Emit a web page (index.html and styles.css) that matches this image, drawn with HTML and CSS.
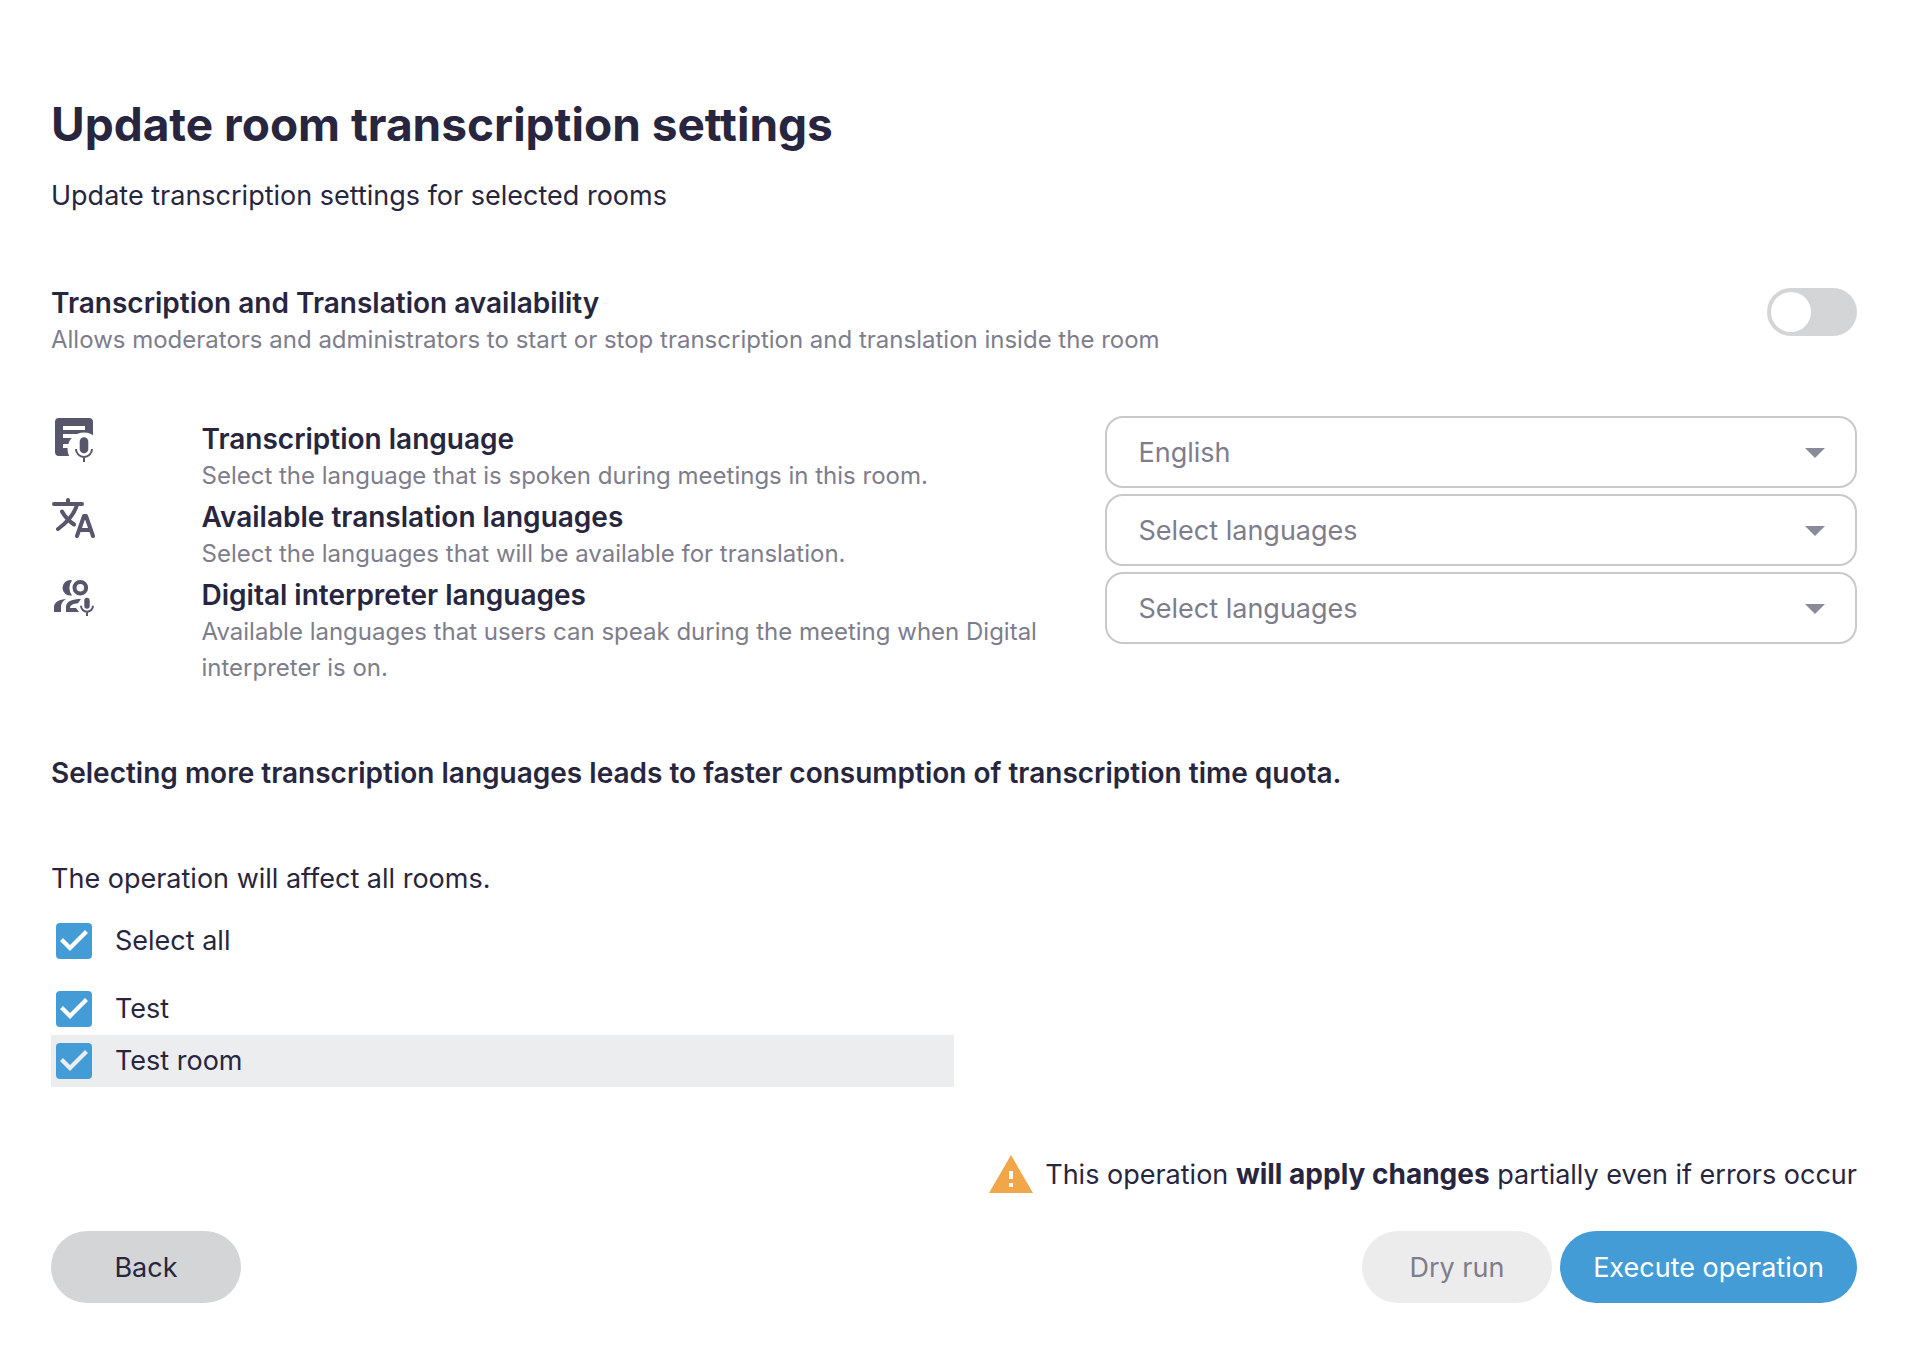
FILE: index.html
```html
<!DOCTYPE html>
<html lang="en">
<head>
<meta charset="utf-8">
<meta name="viewport" content="width=device-width, initial-scale=1">
<title>Update room transcription settings</title>
<link rel="stylesheet" href="styles.css">
</head>
<body>
<main class="page">
  <header class="page-header">
    <h1 class="title">Update room transcription settings</h1>
    <p class="text">Update transcription settings for selected rooms</p>
  </header>

  <section class="availability">
    <div>
      <label class="label" for="availability">Transcription and Translation availability</label>
      <p class="hint">Allows moderators and administrators to start or stop transcription and translation inside the room</p>
    </div>
    <input class="toggle" type="checkbox" role="switch" id="availability">
  </section>

  <section class="settings">
    <div class="setting">
      <svg class="icon" viewBox="0 0 48 48" aria-hidden="true">
        <path fill="currentColor" fill-rule="evenodd" d="M8 2h30a4 4 0 0 1 4 4v34H8a4 4 0 0 1-4-4V6a4 4 0 0 1 4-4zM12 10v4h22v-4zM12 18v4h22v-4zM12 28v4h10v-4z"/>
        <circle fill="#fff" cx="33" cy="33" r="16.500"/>
        <rect fill="currentColor" x="28.700" y="21.300" width="8.600" height="16" rx="4.300"/>
        <path fill="none" stroke="currentColor" stroke-width="2" d="M25 33a8 8 0 0 0 16 0M33 41v5"/>
      </svg>
      <div class="setting-text">
        <label class="label" for="transcription">Transcription language</label>
        <p class="hint">Select the language that is spoken during meetings in this room.</p>
      </div>
      <div class="select-box">
        <select class="select" id="transcription"><option>English</option></select>
      </div>
    </div>
    <div class="setting">
      <svg class="icon" viewBox="0 0 48 48" aria-hidden="true">
        <path fill="none" stroke="currentColor" stroke-width="4" stroke-linecap="round" stroke-linejoin="round" d="M3 10h28M17 10V6M26 10.500C23.500 20 16.500 28 7 35M11 17.500c3 5.500 7 9.500 12 13M26 42l7-20h2l7 20M28.500 36h11"/>
      </svg>
      <div class="setting-text">
        <label class="label" for="translation">Available translation languages</label>
        <p class="hint">Select the languages that will be available for translation.</p>
      </div>
      <div class="select-box">
        <select class="select" id="translation"><option>Select languages</option></select>
      </div>
    </div>
    <div class="setting">
      <svg class="icon" viewBox="0 0 48 48" aria-hidden="true">
        <circle fill="none" stroke="currentColor" stroke-width="4" cx="29.300" cy="15.700" r="5.800"/>
        <path fill="currentColor" d="M21 8.200A7.800 7.800 0 1 0 21 23.400Q15.700 16 21 8.200z"/>
        <path fill="currentColor" d="M3 40v-5c0-5 6-7.700 12-8-4 3-5 5-5 8v5z"/>
        <path fill="currentColor" d="M30 27c-8 0-15 2-15 8v5h13l-3-4h-6c0-3 4-4.500 8-4.700z"/>
        <rect fill="currentColor" x="33.300" y="25.700" width="5.400" height="11" rx="2.700"/>
        <path fill="none" stroke="currentColor" stroke-width="2" d="M30 33.700a6 6 0 0 0 12 0M36 39.700V44"/>
      </svg>
      <div class="setting-text">
        <label class="label" for="interpreter">Digital interpreter languages</label>
        <p class="hint">Available languages that users can speak during the meeting when Digital interpreter is on.</p>
      </div>
      <div class="select-box">
        <select class="select" id="interpreter"><option>Select languages</option></select>
      </div>
    </div>
  </section>

  <p class="notice">Selecting more transcription languages leads to faster consumption of transcription time quota.</p>

  <section class="rooms">
    <p class="text">The operation will affect all rooms.</p>
    <label class="room room-all"><input class="check" type="checkbox" checked>Select all</label>
    <label class="room"><input class="check" type="checkbox" checked>Test</label>
    <label class="room room-alt"><input class="check" type="checkbox" checked>Test room</label>
  </section>

  <footer class="footer">
    <p class="warning">
      <svg class="warning-icon" viewBox="0 0 44 38" aria-hidden="true">
        <path fill="currentColor" fill-rule="evenodd" d="M22 0l22 38H0zM20 16v8h4v-8zM20 28v4h4v-4z"/>
      </svg>
      <span>This operation <strong>will apply changes</strong> partially even if errors occur</span>
    </p>
    <div class="actions">
      <button class="button button-back" type="button">Back</button>
      <button class="button button-dry" type="button">Dry run</button>
      <button class="button button-run" type="button">Execute operation</button>
    </div>
  </footer>
</main>
</body>
</html>
```
FILE: styles.css
```css
*, *::before, *::after { box-sizing: border-box; }

body {
  margin: 0;
  background: #fff;
  color: #28263f;
  font: 400 27px/36px Inter, "Liberation Sans", sans-serif;
}

h1, p { margin: 0; }

.page { padding: 92px 57px 56px 51px; }

.title { font-size: 46px; line-height: 64px; font-weight: 700; }
.page-header .text { margin-top: 22px; }

.availability {
  display: flex;
  align-items: flex-start;
  justify-content: space-between;
  margin-top: 70px;
}

.label { display: block; font-size: 28px; font-weight: 600; line-height: 38px; }
.hint { color: #7e7d8c; font-size: 24px; line-height: 36px; }

.toggle {
  appearance: none;
  flex: none;
  width: 90px;
  height: 48px;
  margin: 4px 0 0;
  padding: 4px;
  border-radius: 24px;
  background: #d4d5d7;
}
.toggle::before {
  content: "";
  display: block;
  width: 40px;
  height: 40px;
  border-radius: 50%;
  background: #fff;
}
.toggle:checked { background: #449cd6; }
.toggle:checked::before { margin-left: auto; }

.settings { margin-top: 58px; }
.setting {
  display: grid;
  grid-template-columns: 1fr 6fr 5fr;
  align-items: start;
}
.setting-text { padding-top: 4px; }
.icon { width: 48px; height: 48px; color: #57566b; }

.select-box { position: relative; }
.select-box::after {
  content: "";
  position: absolute;
  top: 32px;
  right: 32px;
  width: 20px;
  height: 10px;
  background: #8a8a9a;
  clip-path: polygon(0 0, 100% 0, 50% 100%);
  pointer-events: none;
}
.select {
  appearance: none;
  display: block;
  width: 100%;
  height: 72px;
  padding: 2px 64px 0 32px;
  border: 2px solid #c9c9c9;
  border-radius: 18px;
  background: #fff;
  color: #7e7d8c;
  font: inherit;
}

.notice { margin-top: 69px; font-size: 28px; font-weight: 600; }

.rooms { margin-top: 70px; }
.room {
  --check-mark: #fff;
  display: flex;
  align-items: center;
  gap: 23px;
  width: 50%;
  height: 52px;
  padding-left: 5px;
}
.room-all { margin: 18px 0 16px; }
.room-alt { --check-mark: #ecedef; background: #ecedef; }
.check {
  appearance: none;
  flex: none;
  width: 36px;
  height: 36px;
  margin: 0;
  border-radius: 4px;
  background: #449cd6;
}
.check:checked::before {
  content: "";
  display: block;
  width: 36px;
  height: 36px;
  background: var(--check-mark);
  clip-path: polygon(4px 18px, 7px 15px, 14px 22px, 29px 7px, 32px 10px, 14px 28px);
}

.footer { margin-top: 68px; }
.warning { display: flex; align-items: center; justify-content: flex-end; gap: 12px; height: 38px; }
.warning-icon { width: 44px; height: 38px; color: #f2a64a; }
.warning strong { font-size: 28px; font-weight: 700; }

.actions { display: flex; gap: 8px; margin-top: 38px; }
.button {
  min-width: 190px;
  height: 72px;
  padding: 2px 32px 0;
  border: 0;
  border-radius: 36px;
  font: inherit;
}
.button-back { margin-right: auto; background: #d4d5d7; color: #28263f; }
.button-dry { background: #ececec; color: #7e7d8c; }
.button-run { min-width: 297px; background: #449cd6; color: #fff; }
```
